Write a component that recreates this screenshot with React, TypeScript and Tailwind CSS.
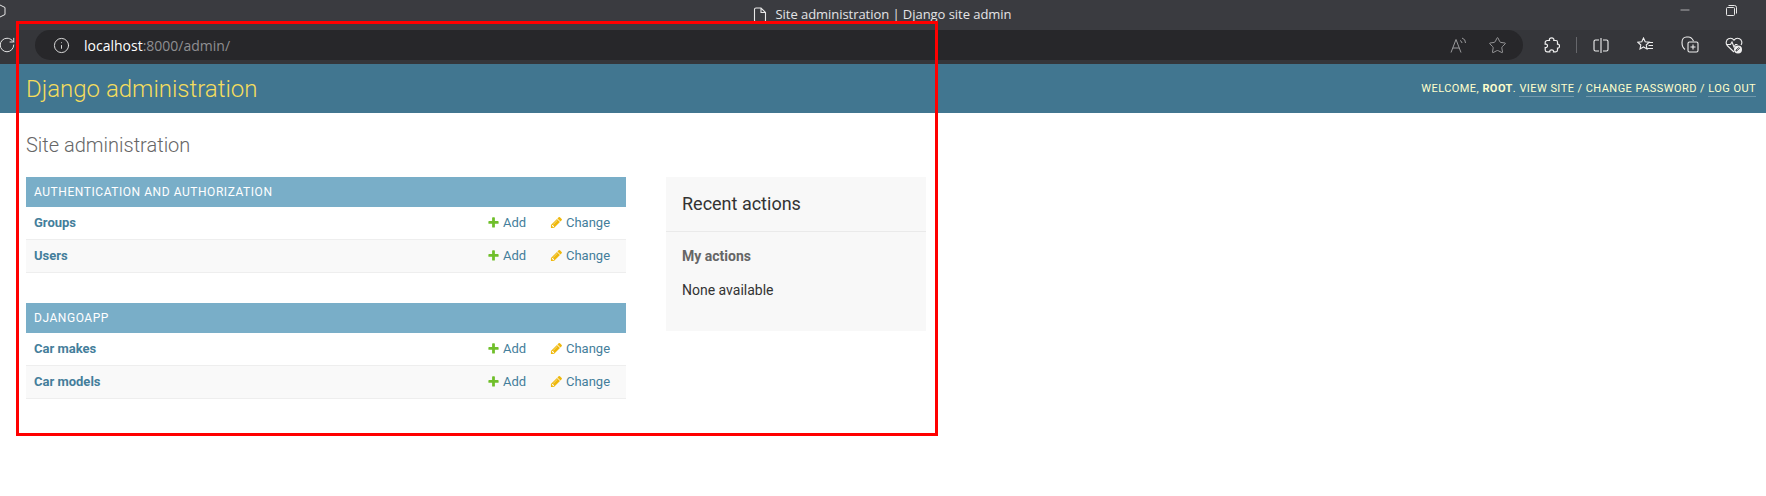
import { RotateCw, Info, Star, Minus } from "lucide-react";

const PLUS =
  "M1600 796v192q0 40-28 68t-68 28h-416v416q0 40-28 68t-68 28h-192q-40 0-68-28t-28-68v-416h-416q-40 0-68-28t-28-68v-192q0-40 28-68t68-28h416v-416q0-40 28-68t68-28h192q40 0 68 28t28 68v416h416q40 0 68 28t28 68z";
const PENCIL =
  "M491 1536l91-91-235-235-91 91v107h128v128h107zm523-928q0-22-22-22-10 0-17 7l-542 542q-7 7-7 17 0 22 22 22 10 0 17-7l542-542q7-7 7-17zm-54-192l416 416-832 832h-416v-416zm683 96q0 53-37 90l-166 166-416-416 166-165q36-38 90-38 53 0 91 38l235 234q37 39 37 91z";

function Row({ name, alt }: { name: string; alt?: boolean }) {
  return (
    <div className={`flex items-center h-[33px] border-b border-[#eeeeee] pl-2 pr-px text-[13px] text-[#447e9b] ${alt ? "bg-[#f9f9f9]" : "bg-white"}`}>
      <a className="font-bold flex-1">{name}</a>
      <a className="flex items-center w-[63px]">
        <svg width="13" height="13" viewBox="0 0 1792 1792" className="mr-[3px] mb-px">
          <path fill="#70bf2b" d={PLUS} />
        </svg>
        Add
      </a>
      <a className="flex items-center w-[75px]">
        <svg width="13" height="13" viewBox="0 0 1792 1792" className="mr-[3px] mb-px">
          <path fill="#efb80b" d={PENCIL} />
        </svg>
        Change
      </a>
    </div>
  );
}

function Module({ title, rows }: { title: string; rows: string[] }) {
  return (
    <div className="mb-[30px]">
      <div className="h-[30px] flex items-center px-2 bg-[#79aec8] text-white text-[12px] uppercase tracking-[0.55px]">
        {title}
      </div>
      {rows.map((r, i) => (
        <Row key={r} name={r} alt={i % 2 === 1} />
      ))}
    </div>
  );
}

export default function App() {
  return (
    <div className="relative w-[1766px] h-[496px] overflow-hidden bg-white font-['Roboto',sans-serif]">
      {/* title bar */}
      <div className="relative h-[30px] bg-[#3a3b40] flex items-center justify-center text-[#e4e4e6] font-['Open_Sans',sans-serif] text-[13px]">
        <svg width="14" height="16" viewBox="0 0 14 16" fill="none" stroke="#e8e8e8" strokeWidth="1" className="absolute left-[-8px] top-[3px]">
          <path d="M7 1.5l6 3v7l-6 3-6-3v-7z" />
        </svg>
        <svg width="14" height="16" viewBox="0 0 14 16" fill="none" stroke="#e8e8e8" strokeWidth="1.1" className="mr-[9px] ml-[-2px]">
          <path d="M1.5 2.5a1.5 1.5 0 0 1 1.5-1.5h5l4.5 4.5v8a1.5 1.5 0 0 1-1.5 1.5h-8a1.5 1.5 0 0 1-1.5-1.5zM8 1v4.5h4.5" />
        </svg>
        <span className="tracking-[-0.05px]">Site administration | Django site admin</span>
        <Minus size={14} strokeWidth={1} className="absolute left-[1678px] top-[3px] text-white" />
        <svg width="11" height="11" viewBox="0 0 11 11" fill="none" stroke="#e8e8e8" strokeWidth="1" className="absolute left-[1726px] top-[5px]">
          <path d="M0.5 3.5a1 1 0 0 1 1-1h6a1 1 0 0 1 1 1v6a1 1 0 0 1-1 1h-6a1 1 0 0 1-1-1zM2.5 0.5h6a2 2 0 0 1 2 2v6" />
        </svg>
      </div>

      {/* toolbar */}
      <div className="h-[34px] bg-[#35363a] flex items-start">
        <RotateCw size={18} strokeWidth={1.3} className="ml-[-2px] mt-[6px] text-[#e6e6e6] shrink-0" />
        <div className="ml-[19px] w-[1488px] h-[30px] rounded-full bg-[#27272a] flex items-center pl-[18px] pr-[16px] font-['Open_Sans',sans-serif] text-[14px] shrink-0">
          <Info size={17} strokeWidth={1.3} className="text-[#e6e6e6]" />
          <span className="ml-[14px] text-white">localhost</span>
          <span className="text-[#8f8f92]">:8000/admin/</span>
          <span className="ml-auto flex items-center text-[#9a9a9c]">
            <svg width="17" height="16" viewBox="0 0 17 16" fill="none" stroke="currentColor" strokeWidth="1">
              <path d="M1 15.500L6 2.500l5 13M2.800 11h6.400M10 3.500a3 3 0 0 1 2 2.500M12 1a5 5 0 0 1 3.500 5" />
            </svg>
            <Star size={19} strokeWidth={1.2} className="ml-[21px]" />
          </span>
        </div>
        <svg width="16" height="16" viewBox="0 0 16 16" fill="none" stroke="#eeeeee" strokeWidth="1.2" className="ml-[21px] mt-[7px] shrink-0">
          <path d="M5.500 3.500C5 1.800 6.200 0.800 7.700 0.800S10.300 2 9.800 3.500H12a1.500 1.500 0 0 1 1.500 1.500v2.200c1.400-.3 2 1 2 2s-.8 2.300-2 2V13a1.800 1.800 0 0 1-1.800 1.800H9.500c.3-1.400-.8-2-1.800-2s-2.200.6-1.900 2H3a1.800 1.800 0 0 1-1.800-1.800v-2.500c1.600.3 2.300-.8 2.300-1.800S2.800 6.800 1.200 7.200V5.500a2 2 0 0 1 2-2z" />
        </svg>
        <div className="ml-[16px] mt-[7px] w-px h-[16px] bg-[#66676b]" />
        <svg width="16" height="15" viewBox="0 0 16 15" fill="none" stroke="#eeeeee" strokeWidth="1.1" className="ml-[16px] mt-[8px]">
          <path d="M6 2H2.500A1.500 1.500 0 0 0 1 3.500v8A1.500 1.500 0 0 0 2.500 13H6M10 2h3.500A1.500 1.500 0 0 1 15 3.500v8a1.500 1.500 0 0 1-1.500 1.500H10M8 0v15" />
        </svg>
        <svg width="17" height="16" viewBox="0 0 17 16" fill="none" stroke="#eeeeee" strokeWidth="1.1" className="ml-[28px] mt-[7px]">
          <path d="M6.500 1l1.700 3.700 4 .5-3 2.800.8 4-3.500-2-3.500 2 .8-4-3-2.800 4-.5zM11 5.500h5M11.500 8.500h4.500M10.500 11.500h5.500" />
        </svg>
        <svg width="18" height="17" viewBox="0 0 18 17" fill="none" stroke="#eeeeee" strokeWidth="1.1" className="ml-[27px] mt-[6px]">
          <path d="M4 13.500C2 12 1 9 1 6.500C1 3 3 1 5.500 1h2C10 1 11.500 3 12.500 5M7 7.500A1.500 1.500 0 0 1 8.500 6h7A1.500 1.500 0 0 1 17 7.500v7a1.500 1.500 0 0 1-1.500 1.500h-7A1.500 1.500 0 0 1 7 14.500zM12 8.500v5M9.500 11h5" />
        </svg>
        <svg width="18" height="17" viewBox="0 0 18 17" className="ml-[26px] mt-[7px]">
          <path fill="none" stroke="#eeeeee" strokeWidth="1.1" d="M9 15L2.200 8.500C0.500 6.500 1 3 3.500 1.800C5.500 0.800 7.800 1.500 9 3.300C10.200 1.500 12.500 0.800 14.500 1.800C17 3 17.500 6 16 8M1.500 7.500h4l1.500-2.500 2 5 1.500-2.500h2" />
          <circle cx="13" cy="12.500" r="4" fill="#eeeeee" />
          <path fill="none" stroke="#3a3b40" strokeWidth="1" d="M11 14l1-.2 2.500-2.500-.8-.8-2.500 2.500z" />
        </svg>
      </div>

      {/* django header */}
      <div className="h-[49px] bg-[#417690] flex items-center justify-between pl-[26px] pr-[10px]">
        <div className="text-[24px] font-light text-[#f5dd5d]">Django administration</div>
        <div className="text-[11px] uppercase tracking-[0.45px] text-[#ffffcc] mt-[1px]">
          Welcome, <strong className="font-bold">root</strong>.{" "}
          <a className="border-b border-[#ffffff40] pb-[1px]">View site</a> /{" "}
          <a className="border-b border-[#ffffff40] pb-[1px]">Change password</a> /{" "}
          <a className="border-b border-[#ffffff40] pb-[1px]">Log out</a>
        </div>
      </div>

      {/* content */}
      <div className="px-[26px]">
        <h1 className="h-[64px] flex items-center text-[20px] font-light text-[#666666]">Site administration</h1>
        <div className="flex items-start">
          <div className="w-[600px]">
            <Module title="Authentication and Authorization" rows={["Groups", "Users"]} />
            <Module title="Djangoapp" rows={["Car makes", "Car models"]} />
          </div>
          <div className="ml-[40px] w-[260px] h-[154px] bg-[#f8f8f8]">
            <div className="h-[55px] flex items-center px-4 pb-[2px] border-b border-[#eaeaea] text-[18px] text-[#333333]">
              Recent actions
            </div>
            <div className="px-4 pt-[14px] text-[14px]">
              <div className="font-bold text-[#666666]">My actions</div>
              <div className="mt-[13px] text-[#333333]">None available</div>
            </div>
          </div>
        </div>
      </div>

      {/* red annotation box drawn over the screenshot */}
      <div className="absolute left-[16px] top-[21px] w-[922px] h-[415px] border-[3px] border-[#ff0000]" />
    </div>
  );
}
